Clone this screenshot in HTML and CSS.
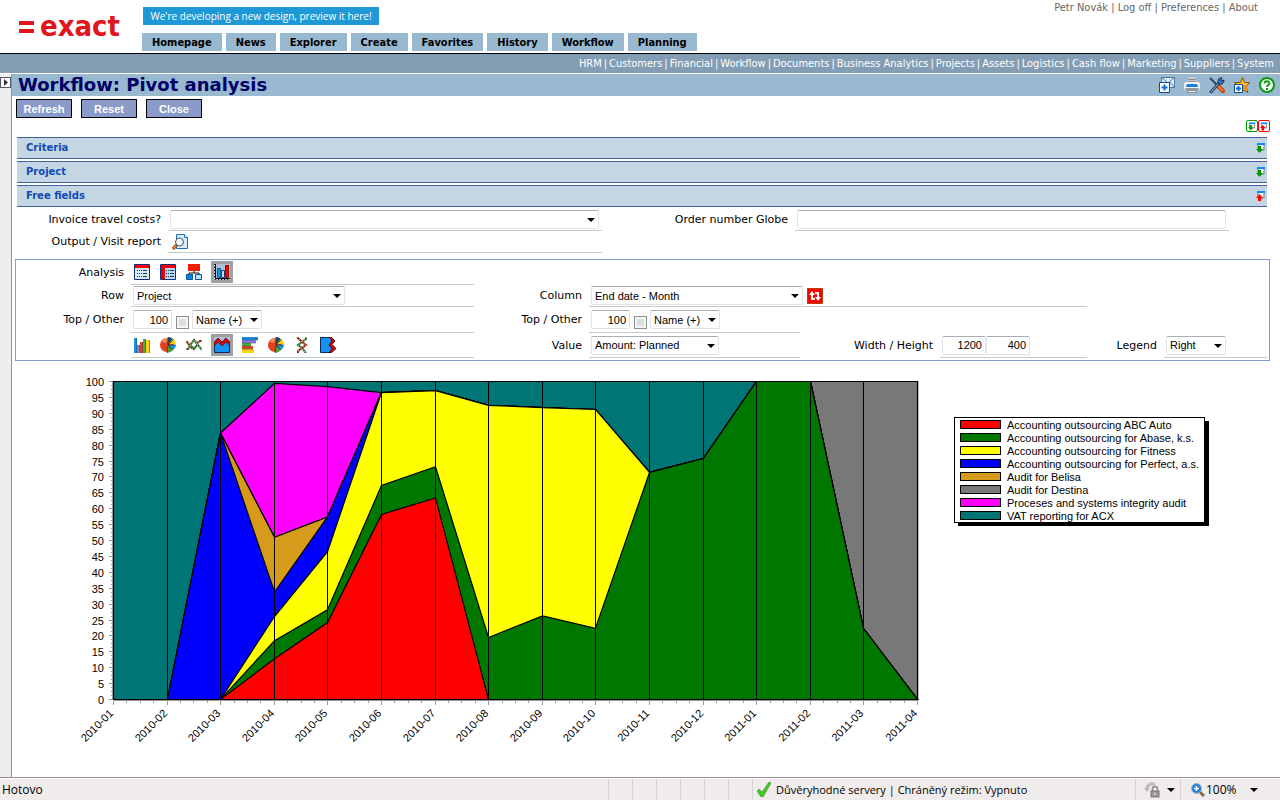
FILE: index.html
```html
<!DOCTYPE html>
<html lang="en">
  <head>
    <meta charset="UTF-8">
    <title>Workflow: Pivot analysis</title>
    <link rel="stylesheet" href="styles.css">
  </head>
  <body>
    <!-- shared icon shapes -->
    <svg class="defs" width="0" height="0">
      <symbol id="i-panel-down" viewBox="0 0 10 10">
        <path d="M2 1h6v6H2z" fill="#fff" stroke="#777"/>
        <path d="M1 0h8v2H1z" fill="#0a8cff"/>
        <path d="M2 3h3v3h2L3.500 10 0 6h2z" fill="#090"/>
      </symbol>
      <symbol id="i-panel-up" viewBox="0 0 10 10">
        <path d="M2 1h6v6H2z" fill="#fff" stroke="#777"/>
        <path d="M1 0h8v2H1z" fill="#0a8cff"/>
        <path d="M2 10h3V7h2L3.500 3 0 7h2z" fill="#f00"/>
      </symbol>
      <symbol id="i-pie" viewBox="0 0 16 16">
        <circle cx="7" cy="8" r="7" fill="#e8401c"/>
        <path d="M2 5a6 6 0 0 1 6-4L6 6z" fill="#ff8a5c"/>
        <path d="M8 7V0a8 8 0 0 1 5 2z" fill="#17506e"/>
        <path d="M9 7l4-5a7 7 0 0 1 3 5z" fill="#fc0"/>
        <path d="M9 8h7a7 7 0 0 1-3 5z" fill="#0a9be0"/>
        <path d="M8 8l5 5a8 8 0 0 1-6 3z" fill="#3fa535"/>
        <path d="M8 0v8l-1 8M8 8l6-6M8 8h8M8 8l5 5" fill="none" stroke="#222" stroke-width=".6"/>
      </symbol>
    </svg>

    <div class="header">
      <a class="logo" href="#"><span class="logo-mark"></span>exact</a>
      <div class="header-mid">
        <a class="banner" href="#">We're developing a new design, preview it here!</a>
        <div class="tabs">
          <a href="#">Homepage</a>
          <a href="#">News</a>
          <a href="#">Explorer</a>
          <a href="#">Create</a>
          <a href="#">Favorites</a>
          <a href="#">History</a>
          <a href="#">Workflow</a>
          <a href="#">Planning</a>
        </div>
      </div>
      <div class="user-links">
        <a href="#">Petr Novák</a> | <a href="#">Log off</a> | <a href="#">Preferences</a> | <a href="#">About</a>
      </div>
    </div>
    <div class="subnav">
      <a href="#">HRM</a> | <a href="#">Customers</a> | <a href="#">Financial</a> | <a href="#">Workflow</a> | <a href="#">Documents</a> | <a href="#">Business Analytics</a> | <a href="#">Projects</a> | <a href="#">Assets</a> | <a href="#">Logistics</a> | <a href="#">Cash flow</a> | <a href="#">Marketing</a> | <a href="#">Suppliers</a> | <a href="#">System</a>
    </div>

    <div class="main">
      <div class="sidebar">
        <button class="expand" aria-label="Expand">
          <svg width="4" height="7" viewBox="0 0 4 7"><path d="M0 0l4 3.500L0 7z" fill="#334"/></svg>
        </button>
      </div>
      <div class="page">
        <div class="titlebar">
          <h1>Workflow: Pivot analysis</h1>
          <div class="tools">
            <button class="icon" aria-label="New message">
              <svg width="16" height="16" viewBox="0 0 16 16">
                <path d="M2.500 .5h13v10h-13z" fill="#dcecfb" stroke="#4a78ad"/>
                <path d="M2.500 .5L9 6l6.500-5.500M15.500 10.500L11 5" fill="none" stroke="#4a78ad"/>
                <path d="M.5 5.500h10v10H.5z" fill="#fff" stroke="#174a86"/>
                <path d="M5.500 7.500v6M2.500 10.500h6" stroke="#0a6fd8" stroke-width="2"/>
              </svg>
            </button>
            <button class="icon" aria-label="Print">
              <svg width="16" height="16" viewBox="0 0 16 16">
                <path d="M4 0h8l1 6H3z" fill="#c9c9c9"/>
                <path d="M4 2.500h8M4 4.500h8" stroke="#8a8a8a"/>
                <rect x="0" y="5" width="16" height="8" rx="2" fill="#f2f2f2"/>
                <path d="M3 7h10l1 3H2z" fill="#1583e0"/>
                <path d="M1 11h14l-1 2H2z" fill="#999"/>
                <path d="M3 13h10v3H3z" fill="#8c8c8c"/>
                <path d="M4 14.500h8" stroke="#eee"/>
              </svg>
            </button>
            <button class="icon" aria-label="Customize">
              <svg width="16" height="16" viewBox="0 0 16 16">
                <path d="M1 1l7 7" stroke="#345" stroke-width="2"/>
                <path d="M9 9l5 5" stroke="#c33c0a" stroke-width="4" stroke-linecap="round"/>
                <path d="M9 9l5 5" stroke="#ff7a2a" stroke-width="2"/>
                <path d="M10 6l-8 9" stroke="#223c66" stroke-width="3" stroke-linecap="round"/>
                <path d="M10 6l-8 9" stroke="#9fc4ea"/>
                <path d="M9 3a3 3 0 0 1 4-2l-1 3 3-1a4 4 0 0 1-6 4z" fill="#3f6bab" stroke="#1d3864"/>
              </svg>
            </button>
            <button class="icon" aria-label="Add to favorites">
              <svg width="16" height="16" viewBox="0 0 16 16">
                <path d="M8.500 .5l2 5h5L12 9.500l2 6-5.500-3L3 15.500l1.500-6L.5 5.500h6z" fill="#ffc21a" stroke="#8a5200"/>
                <path d="M9 8h3l1.500 6-4.500-2z" fill="#f28a1c"/>
                <path d="M.5 7.500h8v8h-8z" fill="#fff" stroke="#174a86"/>
                <path d="M4.500 9v5M2 11.500h5" stroke="#0a6fd8" stroke-width="2"/>
              </svg>
            </button>
            <button class="icon" aria-label="Help">
              <svg width="16" height="16" viewBox="0 0 16 16">
                <circle cx="8" cy="8" r="7" fill="#fff" stroke="#0b9a0b" stroke-width="2"/>
                <path d="M5.500 6.500c0-3 5-3 5-.2C10.500 8 8 8 8 10" fill="none" stroke="#0b9a0b" stroke-width="2"/>
                <path d="M7 11h2v2H7z" fill="#0b9a0b"/>
              </svg>
            </button>
          </div>
        </div>

        <div class="actions">
          <button class="btn">Refresh</button>
          <button class="btn">Reset</button>
          <button class="btn">Close</button>
        </div>

        <div class="toggle-all">
          <button class="icon open-all" aria-label="Expand all"><svg width="8" height="9"><use href="#i-panel-down"/></svg></button>
          <button class="icon close-all" aria-label="Collapse all"><svg width="8" height="9"><use href="#i-panel-up"/></svg></button>
        </div>

        <div class="sections">
          <div class="section"><h2>Criteria</h2><button class="icon" aria-label="Expand Criteria"><svg width="10" height="10"><use href="#i-panel-down"/></svg></button></div>
          <div class="section"><h2>Project</h2><button class="icon" aria-label="Expand Project"><svg width="10" height="10"><use href="#i-panel-down"/></svg></button></div>
          <div class="section"><h2>Free fields</h2><button class="icon" aria-label="Collapse Free fields"><svg width="10" height="10"><use href="#i-panel-up"/></svg></button></div>
          <div class="fields">
            <label for="travel">Invoice travel costs?</label>
            <div class="cell">
              <span class="select wide"><select id="travel"><option></option></select></span>
            </div>
            <label for="globe">Order number Globe</label>
            <div class="cell"><input type="text" id="globe" class="wide"></div>
            <label for="report" class="row2">Output / Visit report</label>
            <div class="cell">
              <button class="icon browse" id="report">
                <svg width="16" height="16" viewBox="0 0 16 16">
                  <path d="M4.500 .5h8l3 3v11h-11z" fill="#d8ecfb" stroke="#1a6fae"/>
                  <path d="M12.500 .5v3h3" fill="#fff" stroke="#1a6fae"/>
                  <circle cx="7.500" cy="8" r="4" fill="#f2f6fa" stroke="#456"/>
                  <path d="M4.500 11L1 15" stroke="#5a2a10" stroke-width="3"/>
                  <path d="M4 11.500L1.500 14.500" stroke="#f47a20" stroke-width="2"/>
                </svg>
              </button>
            </div>
          </div>
        </div>

        <div class="panel">
          <span class="label">Analysis</span>
          <div class="cell">
            <button class="icon" aria-label="List">
              <svg width="16" height="16" viewBox="0 0 16 16">
                <path d="M.5 .5h15v15H.5z" fill="#dcebfb" stroke="#0f2f7a"/>
                <path d="M1 1h14v3H1z" fill="#f00"/>
                <path d="M3 6.500h6M3 9.500h6M3 12.500h6" stroke="#234" stroke-dasharray="1 1"/>
                <path d="M9 6.500h4M9 9.500h4M9 12.500h4" stroke="#234"/>
              </svg>
            </button>
            <button class="icon" aria-label="Matrix">
              <svg width="16" height="16" viewBox="0 0 16 16">
                <path d="M.5 .5h15v15H.5z" fill="#b4dafb" stroke="#0f2f7a"/>
                <path d="M1 1h14v3H5v11H1z" fill="#e00"/>
                <path d="M6 6.500h4M6 9.500h4M6 12.500h4" stroke="#234" stroke-dasharray="1 1"/>
                <path d="M10 6.500h4M10 9.500h4M10 12.500h4" stroke="#234"/>
              </svg>
            </button>
            <button class="icon" aria-label="Tree">
              <svg width="16" height="16" viewBox="0 0 16 16">
                <path d="M2 0h12v7H2z" fill="#f22000"/>
                <path d="M8 7v2M3 11V9h10v2" fill="none" stroke="#111"/>
                <path d="M.5 10.500h6v5h-6z" fill="#0a7fe0" stroke="#045a9c"/>
                <path d="M9.500 10.500h6v5h-6z" fill="#b9e2fb" stroke="#045a9c"/>
              </svg>
            </button>
            <button class="icon active" aria-label="Chart">
              <svg width="16" height="16" viewBox="0 0 16 16">
                <path d="M0 0h16v16H0z" fill="#b4bfd4"/>
                <path d="M1.500 0v14.500H16" fill="none" stroke="#111"/>
                <path d="M.5 0v15M1 15.500h15" fill="none" stroke="#111" stroke-dasharray="1 2"/>
                <path d="M3.500 4.500h3v9h-3z" fill="#0a9bf5" stroke="#0560a8"/>
                <path d="M7.500 6.500h3v7h-3z" fill="#bfe3fb" stroke="#146"/>
                <path d="M11.500 1.500h3v12h-3z" fill="#f00" stroke="#900"/>
              </svg>
            </button>
          </div>

          <label for="row" class="start">Row</label>
          <div class="cell">
            <span class="select long"><select id="row"><option>Project</option></select></span>
          </div>
          <label for="column">Column</label>
          <div class="cell span3">
            <span class="select long"><select id="column"><option>End date - Month</option></select></span>
            <button class="icon swap" aria-label="Swap row and column">
              <svg width="16" height="16" viewBox="0 0 16 16">
                <path d="M.5 .5h15v15H.5z" fill="#f00" stroke="#b8400c"/>
                <path d="M5 6v5h3M8 5h3v5" fill="none" stroke="#fff" stroke-width="2"/>
                <path d="M2 7l3-4 3 4zM8 9h6l-3 4z" fill="#fff"/>
              </svg>
            </button>
          </div>

          <label for="top1" class="start">Top / Other</label>
          <div class="cell">
            <input type="text" id="top1" class="num" value="100">
            <input type="checkbox" aria-label="Other rows">
            <span class="select short"><select aria-label="Row order"><option>Name (+)</option></select></span>
          </div>
          <label for="top2">Top / Other</label>
          <div class="cell">
            <input type="text" id="top2" class="num" value="100">
            <input type="checkbox" aria-label="Other columns">
            <span class="select short"><select aria-label="Column order"><option>Name (+)</option></select></span>
          </div>

          <div class="cell charts start2">
            <button class="icon" aria-label="Bars">
              <svg width="16" height="16" viewBox="0 0 16 16">
                <path d="M0 1h3v15H0z" fill="#1590e8"/><path d="M3 8h3v8H3z" fill="#8a7be8"/>
                <path d="M6 5h3v11H6z" fill="#e8431c"/><path d="M9 2h3v14H9z" fill="#4caf3c"/>
                <path d="M12 3h4v13h-4z" fill="#ffd21a"/>
                <path d="M2.500 1v15M5.500 8v8M8.500 5v11M11.500 2v14M15.500 3v13" stroke="#245" stroke-width=".5"/>
              </svg>
            </button>
            <button class="icon" aria-label="Pie"><svg width="16" height="16"><use href="#i-pie"/></svg></button>
            <button class="icon" aria-label="Lines">
              <svg width="16" height="16" viewBox="0 0 16 16">
                <path d="M0 4l5 6 2 2M10 7l4-3h2" fill="none" stroke="#8e2410" stroke-width="2"/>
                <path d="M0 12h2l3-5 3-4 4 5 4 5" fill="none" stroke="#2a6a28" stroke-width="2"/>
                <path d="M5 9l3 3 3-4" fill="none" stroke="#2a6a28" stroke-width="2"/>
                <path d="M0 4l5 6 2 2M0 12h2l3-5 3-4 4 5 4 5M10 7l4-3h2" fill="none" stroke="#fff" stroke-width=".8" stroke-dasharray="1 2"/>
              </svg>
            </button>
            <button class="icon active" aria-label="Area">
              <svg width="16" height="16" viewBox="0 0 16 16">
                <path d="M0 0h16v16H0z" fill="#b4bfd4"/>
                <path d="M.5 5.500l4-4 4 4 3-4 4 4v10H.5z" fill="#1493f5" stroke="#0a2a5a"/>
                <path d="M0 5l4-4 4 4 4-4 4 4v4l-4-4-4 4-4-4-4 4z" fill="#d00a0a" stroke="#400" stroke-width=".6"/>
              </svg>
            </button>
            <button class="icon" aria-label="Horizontal bars">
              <svg width="16" height="16" viewBox="0 0 16 16">
                <path d="M0 0h16v3H0z" fill="#1d87d8"/><path d="M0 3h14v3H0z" fill="#8a7be8"/>
                <path d="M0 6h9v3H0z" fill="#4caf3c"/><path d="M0 9h11v3H0z" fill="#e8431c"/>
                <path d="M0 12h12v4H0z" fill="#ffd21a"/>
                <path d="M0 3h16M0 6h14M0 9h9M0 12h11" stroke="#245" stroke-width=".5"/>
              </svg>
            </button>
            <button class="icon" aria-label="Pie 2"><svg width="16" height="16"><use href="#i-pie"/></svg></button>
            <button class="icon" aria-label="Vertical lines">
              <svg width="16" height="16" viewBox="0 0 16 16">
                <path d="M12 0v2L8 5 4 8l4 3 4 5" fill="none" stroke="#2a6a28" stroke-width="2"/>
                <path d="M3 0l5 5 4 3-4 3-4 3v2" fill="none" stroke="#8e2410" stroke-width="2"/>
                <path d="M3 0l5 5 4 3-4 3-4 3v2M12 0v2L8 5 4 8l4 3 4 5" fill="none" stroke="#fff" stroke-width=".8" stroke-dasharray="1 2"/>
              </svg>
            </button>
            <button class="icon" aria-label="Vertical area">
              <svg width="16" height="16" viewBox="0 0 16 16">
                <path d="M.5 .5H10l4 4-4 3 4 4-4 4H.5z" fill="#1493f5" stroke="#0a2a5a"/>
                <path d="M9 0h2l4 4-3 3.500 4 4-5 4.500H9l3-4.500L9 8l3-4z" fill="#d00a0a" stroke="#500"/>
              </svg>
            </button>
          </div>
          <label for="value">Value</label>
          <div class="cell">
            <span class="select medium"><select id="value"><option>Amount: Planned</option></select></span>
          </div>
          <label for="width">Width / Height</label>
          <div class="cell">
            <input type="text" id="width" class="num size" value="1200"><input type="text" class="num size" aria-label="Height" value="400">
          </div>
          <label for="legend">Legend</label>
          <div class="cell">
            <span class="select mini"><select id="legend"><option>Right</option></select></span>
          </div>
        </div>

        <svg class="chart" id="chart" width="1200" height="400"></svg>
      </div>
    </div>

    <div class="status">
      <div class="status-text">Hotovo</div>
      <div class="slot"></div><div class="slot"></div><div class="slot"></div>
      <div class="slot"></div><div class="slot"></div><div class="slot"></div>
      <div class="zone">
        <svg width="14" height="15" viewBox="0 0 14 15"><path d="M0 9l2-2 3 3L12 0l2 1L6 15H4z" fill="#4ac22e" stroke="#2f9a1c" stroke-width=".6"/></svg>
        Důvěryhodné servery | Chráněný režim: Vypnuto
      </div>
      <button class="lock" aria-label="Security">
        <svg width="16" height="16" viewBox="0 0 16 16">
          <path d="M3 8a5 5 0 0 1 8-5" fill="none" stroke="#bbb" stroke-width="3"/>
          <path d="M0 6h6l-3 4z" fill="#bbb"/>
          <path d="M8.500 9V7a2 2 0 0 1 5 0v2" fill="none" stroke="#888" stroke-width="1.500"/>
          <rect x="7" y="9" width="8" height="6" fill="#999" stroke="#777"/>
          <path d="M11 11v2" stroke="#fff"/>
        </svg>
        <span class="caret"></span>
      </button>
      <button class="zoom">
        <svg width="14" height="14" viewBox="0 0 14 14">
          <path d="M8 8l5 5" stroke="#8a6a4a" stroke-width="3"/>
          <circle cx="5.500" cy="5.500" r="5" fill="#2583d8" stroke="#9bb8d4"/>
          <path d="M5.500 3v5M3 5.500h5" stroke="#fff" stroke-width="1.500"/>
        </svg>
        <span>100%</span>
        <span class="caret"></span>
      </button>
    </div>
    <script src="chart.js"></script>
  </body>
</html>
```
FILE: styles.css
```css
* { box-sizing: border-box; }
html, body { height: 100%; margin: 0; padding: 0; }
body {
  display: flex; flex-direction: column; overflow: hidden;
  background: #fff; color: #000;
  font: 11px/14px "DejaVu Sans", Verdana, sans-serif;
}
a { color: inherit; text-decoration: none; }
h1, h2 { margin: 0; }
button { margin: 0; padding: 0; font: inherit; color: inherit; cursor: pointer; }
svg { display: block; flex: none; }
.defs { position: absolute; }
.icon { display: block; flex: none; border: none; background: none; }

/* header */
.header { display: flex; height: 54px; border-bottom: 1px solid #000; }
.logo {
  display: flex; align-items: center; gap: 6px; width: 142px; padding: 0 0 2px 19px;
  color: #e2141c; font: bold 29px/40px "DejaVu Sans Condensed", Tahoma, sans-serif;
}
.logo-mark { width: 15px; height: 12px; margin-top: 3px; border: solid #e2141c; border-width: 4px 0; }
.header-mid { flex: 1; padding-top: 7px; }
.banner {
  display: block; width: 236px; height: 18px; margin: 0 0 8px 1px;
  background: #1e98d7; color: #fff; text-align: center;
  font: 10px/18px "Open Sans", "Trebuchet MS", sans-serif;
}
.tabs { display: flex; gap: 4px; }
.tabs a {
  height: 18px; padding: 0 10px; background: #99b9d0;
  font: bold 11px/20px "DejaVu Sans Condensed", Tahoma, sans-serif;
}
.user-links {
  padding: 1px 22px 0 0; color: #666;
  font: 11px/14px "DejaVu Sans Condensed", Tahoma, sans-serif;
}
.subnav {
  display: flex; justify-content: flex-end; gap: 2px;
  height: 20px; padding-right: 6px; border-bottom: 1px solid #fff;
  background: #839db4; color: #fff; white-space: nowrap;
  font: 11px/20px "DejaVu Sans Condensed", Tahoma, sans-serif;
}

/* main area */
.main { display: flex; flex: 1; min-height: 0; }
.sidebar { width: 12px; padding-top: 3px; background: #eee; border-right: 1px solid #989094; }
.expand {
  display: flex; align-items: center; justify-content: center;
  width: 11px; height: 11px; border: 1px solid #556; background: #fff;
}
.page { flex: 1; min-width: 0; overflow: hidden; }
.titlebar {
  display: flex; align-items: center; justify-content: space-between;
  height: 22px; padding: 0 5px 0 6px; background: #99b9d0;
}
.titlebar h1 { color: #000066; font-size: 18px; line-height: 24px; }
.tools { display: flex; gap: 9px; }
.actions { display: flex; gap: 9px; padding: 3px 4px 2px; }
.btn {
  width: 56px; height: 19px; border: 1px solid #000;
  background: #8a9ac9; color: #fff;
  font: bold 11px/14px "Liberation Sans", Arial, sans-serif;
}
.toggle-all { display: flex; justify-content: flex-end; padding: 0 10px 5px 0; }
.toggle-all .icon { width: 12px; height: 12px; padding: 1px; border: 1px solid #090; border-radius: 2px; }
.toggle-all .close-all { border-color: #f00; }

.sections { padding: 0 13px 0 5px; }
.section {
  display: flex; align-items: center; justify-content: space-between;
  height: 22px; margin-bottom: 2px; padding: 0 1px 0 9px;
  background: #c4d6e3; border: solid #4162a0; border-width: 1px 0;
}
.section h2 { color: #0f4bb4; font-size: 10px; line-height: 20px; }

/* form grids */
label, .label { padding-right: 7px; text-align: right; align-self: center; }
.cell { display: flex; align-items: center; height: 100%; border-bottom: 1px solid #bfcdcb; }
.fields {
  display: grid; grid-template-columns: 151px 434fr 193px 434fr 38px;
  grid-template-rows: 22px 22px;
}
.fields .cell { padding: 0 3px 0 2px; }
.fields .row2 { grid-column: 1; }
.browse { margin-left: 2px; }
.panel {
  display: grid; grid-template-columns: 115px 343fr 115px 211fr 140px 147fr 77px 103fr;
  grid-template-rows: 25px 22px 26px 25px;
  margin: 6px 10px 0 3px; padding: 0 2px 2px 0; border: 1px solid #7ba0cf;
}
.panel .cell { padding-left: 2px; }
.panel .icon { margin-right: 10px; }
.panel .active { margin: 0 9px 0 -1px; padding: 3px; background: #a0a0a0; }
.panel .cell .icon:first-child { margin-left: 1px; }
.start { grid-column: 1; }
.start2 { grid-column: 2; }
.span3 { grid-column: span 3; }
.panel .swap { margin-left: 4px; }

input[type=text], select {
  height: 19px; margin: 0; padding: 0 3px; border: 1px solid #e2e3ea;
  border-top-color: #abadb3; border-radius: 2px; background: #fff; color: #000;
  font: 11px/14px "Liberation Sans", Arial, sans-serif;
}
select { width: 100%; appearance: none; -webkit-appearance: none; }
.select { position: relative; display: flex; }
.select::after, .caret {
  border: 4px solid transparent; border-top-color: #000; border-bottom: none; content: "";
}
.select::after { position: absolute; right: 4px; top: 8px; pointer-events: none; }
.wide { width: 100%; }
.long { width: 212px; }
.medium { width: 128px; }
.short { width: 70px; }
.mini { width: 60px; }
.num { width: 39px; text-align: right; }
.size { width: 44px; }
input[type=checkbox] {
  appearance: none; -webkit-appearance: none;
  width: 13px; height: 13px; margin: 5px 3px 0 4px;
  border: 1px solid #8e8f8f; background: #dcdfe2; box-shadow: inset 0 0 0 2px #f4f4f4;
}

/* chart */
.chart { margin-left: 3px; font: 11px "Liberation Sans", Arial, sans-serif; }
.grid { stroke: #000; shape-rendering: crispEdges; }
.tick { stroke: #999; shape-rendering: crispEdges; }

/* status bar */
.status {
  display: flex; height: 23px; border-top: 1px solid #959092; background: #f0eceb;
  box-shadow: inset 0 1px #fff;
  font: 12px/20px "Open Sans", "Segoe UI", sans-serif;
}
.status-text { flex: 1; padding: 2px; }
.slot { width: 24px; margin-top: 1px; border-left: 1px solid #d8d4d4; }
.zone, .lock, .zoom {
  display: flex; align-items: center; margin-top: 1px;
  border: none; border-left: 1px solid #d8d4d4; background: none;
}
.zone { width: 383px; padding-left: 4px; gap: 5px; white-space: nowrap; font-size: 11px; }
.lock { width: 45px; padding-left: 8px; gap: 7px; }
.zoom { width: 100px; padding-left: 10px; gap: 1px; }
.zoom .caret { margin-left: 12px; }
```
FILE: chart.js
```js
var months = ['2010-01', '2010-02', '2010-03', '2010-04', '2010-05', '2010-06', '2010-07', '2010-08',
  '2010-09', '2010-10', '2010-11', '2010-12', '2011-01', '2011-02', '2011-03', '2011-04'];
// upper edge of every area in the stack, in percent
var series = [
  { name: 'Accounting outsourcing ABC Auto', color: '#ff0000', top: [0, 0, 0, 12.8, 24.2, 58.2, 63.4, 0, 0, 0, 0, 0, 0, 0, 0, 0] },
  { name: 'Accounting outsourcing for Abase, k.s.', color: '#007800', top: [0, 0, 0, 18.5, 28.2, 67.3, 73.2, 19.5, 26.3, 22.4, 71.4, 75.8, 100, 100, 22.3, 0] },
  { name: 'Accounting outsourcing for Fitness', color: '#ffff00', top: [0, 0, 0, 26.1, 46.5, 96.5, 97.1, 92.5, 91.8, 91.2, 71.4, 75.8, 100, 100, 22.3, 0] },
  { name: 'Accounting outsourcing for Perfect, a.s.', color: '#0000ff', top: [0, 0, 83.8, 33.8, 57.4, 96.5, 97.1, 92.5, 91.8, 91.2, 71.4, 75.8, 100, 100, 22.3, 0] },
  { name: 'Audit for Belisa', color: '#d79b1c', top: [0, 0, 83.8, 51, 57.4, 96.5, 97.1, 92.5, 91.8, 91.2, 71.4, 75.8, 100, 100, 22.3, 0] },
  { name: 'Audit for Destina', color: '#787878', top: [0, 0, 83.8, 51, 57.4, 96.5, 97.1, 92.5, 91.8, 91.2, 71.4, 75.8, 100, 100, 100, 100] },
  { name: 'Proceses and systems integrity audit', color: '#ff00ff', top: [0, 0, 83.8, 99.4, 98.4, 96.5, 97.1, 92.5, 91.8, 91.2, 71.4, 75.8, 100, 100, 100, 100] },
  { name: 'VAT reporting for ACX', color: '#007575', top: [100, 100, 100, 100, 100, 100, 100, 100, 100, 100, 100, 100, 100, 100, 100, 100] }
];

var chart = document.getElementById('chart');
var left = 98, right = 902, topY = 20, bottom = 338;
var step = (right - left) / (months.length - 1);

function add(tag, attrs, text) {
  var el = document.createElementNS('http://www.w3.org/2000/svg', tag);
  for (var key in attrs) el.setAttribute(key, attrs[key]);
  if (text) el.textContent = text;
  chart.appendChild(el);
}
function line(cls, x1, y1, x2, y2) {
  add('line', { 'class': cls, x1: x1 + 0.5, y1: y1 + 0.5, x2: x2 + 0.5, y2: y2 + 0.5 });
}
function xAt(i) { return Math.round(left + i * step); }
function yAt(v) { return bottom - v * (bottom - topY) / 100; }

// areas, back to front
for (var s = series.length - 1; s >= 0; s--) {
  var points = series[s].top.map(function(v, i) { return (xAt(i) + 0.5) + ',' + (yAt(v) + 0.5); });
  points.push((right + 0.5) + ',' + (bottom + 0.5), (left + 0.5) + ',' + (bottom + 0.5));
  add('polygon', { points: points.join(' '), fill: series[s].color, stroke: '#000', 'stroke-width': 1.2 });
}

// y axis
for (var v = 0; v <= 100; v += 1.25) {
  var y = Math.round(yAt(v));
  line('tick', v % 5 ? left - 3 : left - 5, y, left - 1, y);
  if (v % 5 === 0) add('text', { x: left - 9, y: y + 5, 'text-anchor': 'end' }, String(v));
}
line('tick', left - 1, topY, left - 1, bottom);

// x axis
line('tick', left, bottom + 1, right, bottom + 1);
months.forEach(function(month, i) {
  var x = xAt(i);
  line('grid', x, topY, x, bottom);
  line('tick', x, bottom + 1, x, bottom + 5);
  for (var m = 1; m < 4 && i < months.length - 1; m++) {
    var mx = Math.round(left + (i + m / 4) * step);
    line('tick', mx, bottom + 1, mx, bottom + 3);
  }
  add('text', { transform: 'translate(' + (x + 1) + ' ' + (bottom + 15) + ') rotate(-45)', 'text-anchor': 'end' }, month);
});

// legend
add('rect', { x: 943, y: 60, width: 251, height: 105 });
add('rect', { x: 939.5, y: 56.5, width: 250, height: 105, fill: '#fff', stroke: '#000' });
series.forEach(function(item, i) {
  add('rect', { x: 945.5, y: 59.5 + i * 13, width: 40, height: 8, fill: item.color, stroke: '#000' });
  add('text', { x: 992, y: 68 + i * 13 }, item.name);
});
```
